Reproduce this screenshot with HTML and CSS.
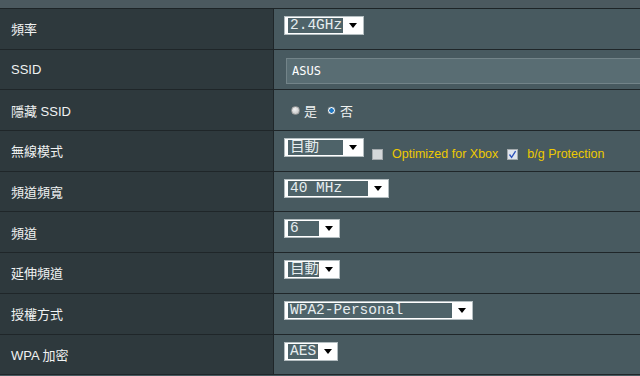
FILE: index.html
```html
<!DOCTYPE html>
<html lang="zh-TW">

<head>
  <meta charset="UTF-8">
  <meta name="viewport" content="width=device-width, initial-scale=1.0">
  <title>無線網路 - 一般設定</title>
  <link rel="stylesheet" href="styles.css">
</head>

<body>
  <div class="form-table">
    <div class="top-strip"></div>

    <div class="row">
      <div class="label">頻率</div>
      <div class="field">
        <div class="select sel-80"><span class="val">2.4GHz</span><span class="arrow"></span></div>
      </div>
    </div>

    <div class="row">
      <div class="label">SSID</div>
      <div class="field">
        <div class="text-input">ASUS</div>
      </div>
    </div>

    <div class="row">
      <div class="label">隱藏 SSID</div>
      <div class="field centered">
        <span class="radio"></span><span class="radio-text">是</span>
        <span class="radio checked"></span><span class="radio-text">否</span>
      </div>
    </div>

    <div class="row">
      <div class="label">無線模式</div>
      <div class="field">
        <div class="select sel-80"><span class="val">自動</span><span class="arrow"></span></div>
        <div class="options">
          <span class="checkbox"></span><span class="opt-text">Optimized for Xbox</span>
          <span class="checkbox checked">
            <svg viewBox="0 0 11 11" width="11" height="11"><path d="M2.5 5.5 L4.6 8.4 L8.6 2.2" fill="none" stroke="#2a4fb8" stroke-width="1.3"/></svg>
          </span><span class="opt-text">b/g Protection</span>
        </div>
      </div>
    </div>

    <div class="row">
      <div class="label">頻道頻寬</div>
      <div class="field">
        <div class="select sel-105"><span class="val">40 MHz</span><span class="arrow"></span></div>
      </div>
    </div>

    <div class="row">
      <div class="label">頻道</div>
      <div class="field">
        <div class="select sel-56"><span class="val">6</span><span class="arrow"></span></div>
      </div>
    </div>

    <div class="row">
      <div class="label">延伸頻道</div>
      <div class="field">
        <div class="select sel-56"><span class="val">自動</span><span class="arrow"></span></div>
      </div>
    </div>

    <div class="row">
      <div class="label">授權方式</div>
      <div class="field">
        <div class="select sel-189"><span class="val">WPA2-Personal</span><span class="arrow"></span></div>
      </div>
    </div>

    <div class="row">
      <div class="label">WPA 加密</div>
      <div class="field">
        <div class="select sel-54"><span class="val">AES</span><span class="arrow"></span></div>
      </div>
    </div>
  </div>
</body>

</html>
```

FILE: styles.css
```css
body {
  margin: 0;
  background-color: #475a60;
  font-family: "Liberation Sans", Arial, "Noto Sans CJK TC", sans-serif;
  font-size: 13px;
  overflow: hidden;
}

.form-table {
  width: 640px;
  height: 376px;
}

.top-strip {
  height: 8px;
  background-color: #4b595f;
  border-bottom: 1px solid #1d2427;
}

.row {
  display: grid;
  grid-template-columns: 274px 1fr;
  height: 40.7px;
  box-sizing: border-box;
  border-bottom: 1px solid #1f2629;
}

.label {
  display: flex;
  align-items: center;
  padding-left: 11px;
  background-color: #2e393d;
  border-right: 1px solid #1f2629;
  color: #f0f2f2;
}

.field {
  display: flex;
  align-items: flex-start;
  padding-top: 7px;
  padding-left: 10px;
  background-color: #485a60;
}

.field.centered {
  align-items: center;
  padding-top: 0;
  padding-left: 17px;
}

/* drop-down boxes */
.select {
  display: inline-flex;
  align-items: center;
  height: 19px;
  box-sizing: border-box;
  padding-left: 3px;
  background-color: #fff;
  border: 1px solid #b4bec1;
}

.select .val {
  display: block;
  height: 15px;
  padding-left: 2px;
  line-height: 15px;
  background-color: #4e6369;
  color: #e6edef;
  font-family: "Liberation Mono", "Noto Sans CJK TC", monospace;
  font-size: 14.5px;
  white-space: nowrap;
  overflow: hidden;
  box-sizing: border-box;
}

.select .arrow {
  flex: 1;
  display: flex;
  justify-content: center;
}

.select .arrow::after {
  content: "";
  border-left: 4px solid transparent;
  border-right: 4px solid transparent;
  border-top: 5px solid #000;
}

.sel-80 { width: 80px; }
.sel-80 .val { width: 55px; }
.sel-105 { width: 105px; }
.sel-105 .val { width: 80px; }
.sel-56 { width: 56px; }
.sel-56 .val { width: 31px; }
.sel-54 { width: 54px; }
.sel-54 .val { width: 30px; }
.sel-189 { width: 189px; }
.sel-189 .val { width: 164px; }

/* text input */
.text-input {
  flex: 1;
  height: 26px;
  margin-left: 2px;
  margin-top: 1px;
  box-sizing: border-box;
  padding-left: 5px;
  line-height: 24px;
  background-color: #596d73;
  border: 1px solid #738489;
  border-right: none;
  color: #fff;
  font-family: "DejaVu Sans Mono", monospace;
  font-size: 12px;
}

/* radio buttons */
.radio {
  display: inline-block;
  width: 9px;
  height: 9px;
  border-radius: 50%;
  box-sizing: border-box;
  background: radial-gradient(circle at 40% 35%, #f4f4f4, #b8b8b8);
  border: 1px solid #9a9a9a;
}

.radio.checked {
  margin-left: 10px;
  background: radial-gradient(circle, #1f78c4 0 2px, #f2f4f5 2.5px);
  border: 1px solid #5a6a70;
}

.radio-text {
  margin-left: 4px;
  color: #f0f2f2;
  font-family: "Noto Sans CJK TC", sans-serif;
  font-size: 13px;
}

/* checkboxes */
.options {
  display: flex;
  align-items: center;
  margin-top: 9px;
  margin-left: 8px;
}

.checkbox {
  display: inline-flex;
  width: 11px;
  height: 11px;
  box-sizing: border-box;
  background-color: #d4d8da;
  border: 1px solid #a4aaad;
}

.checkbox svg {
  margin: -1px;
}

.checkbox.checked {
  margin-left: 9px;
  background-color: #dfe4ec;
}

.opt-text {
  margin-left: 9px;
  color: #eec900;
  font-size: 12.5px;
}
```
